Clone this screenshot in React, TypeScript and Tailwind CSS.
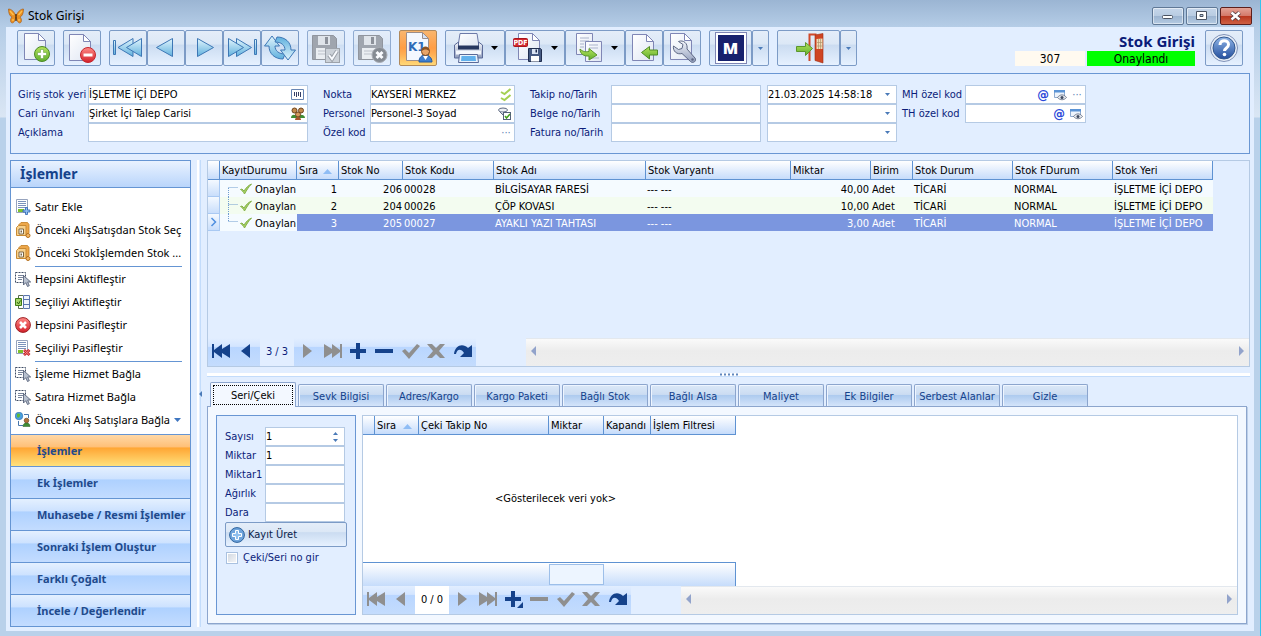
import { useState, type ReactNode } from "react"
import clsx from "clsx"

const UI = "font-['DejaVu_Sans_Condensed','Noto_Sans',sans-serif]"
const SEGOE = "font-['Noto_Sans',sans-serif]"

/* ---------- shared svg paint ---------- */

function Gradients() {
  return (
    <svg className="absolute h-0 w-0" aria-hidden="true">
      <defs>
        <linearGradient id="page" x1="0" y1="0" x2="1" y2="1">
          <stop offset="0" stopColor="#ffffff" />
          <stop offset="1" stopColor="#dfe6f3" />
        </linearGradient>
        <linearGradient id="sky" x1="0" y1="0" x2="0" y2="1">
          <stop offset="0" stopColor="#e2f5fd" />
          <stop offset="1" stopColor="#5fb0dd" />
        </linearGradient>
        <linearGradient id="green" x1="0" y1="0" x2="0" y2="1">
          <stop offset="0" stopColor="#b5e35b" />
          <stop offset="1" stopColor="#5fae2e" />
        </linearGradient>
        <linearGradient id="red" x1="0" y1="0" x2="0" y2="1">
          <stop offset="0" stopColor="#ff8a86" />
          <stop offset="1" stopColor="#d3202a" />
        </linearGradient>
        <linearGradient id="steel" x1="0" y1="0" x2="0" y2="1">
          <stop offset="0" stopColor="#f4f6fb" />
          <stop offset="1" stopColor="#8f9cbb" />
        </linearGradient>
        <linearGradient id="blue" x1="0" y1="0" x2="0" y2="1">
          <stop offset="0" stopColor="#8fb4e6" />
          <stop offset="1" stopColor="#244f9e" />
        </linearGradient>
      </defs>
    </svg>
  )
}

function Icon({ w = 32, h = 32, children }: { w?: number; h?: number; children: ReactNode }) {
  return (
    <svg width={w} height={h} viewBox={`0 0 ${w} ${h}`} className="shrink-0" aria-hidden="true">
      {children}
    </svg>
  )
}

function Sheet({ x = 5, y = 1 }: { x?: number; y?: number }) {
  return (
    <g transform={`translate(${x} ${y})`} stroke="#7f86b5" strokeWidth="1">
      <path d="M.5.5h14l7 7v19H.5z" fill="url(#page)" />
      <path d="M14.500.5v7h7z" fill="#fff" />
    </g>
  )
}

/* ---------- toolbar icons (32px) ---------- */

const NewIcon = () => (
  <Icon>
    <Sheet x={4} />
    <circle cx="22" cy="22" r="7.500" fill="url(#green)" stroke="#4c8a26" />
    <path d="M20.500 17.500h3v3h3v3h-3v3h-3v-3h-3v-3h3z" fill="#fff" stroke="#5b9a35" strokeWidth=".5" />
  </Icon>
)

const DeleteIcon = () => (
  <Icon>
    <Sheet x={3} y={2} />
    <circle cx="22" cy="23" r="7.500" fill="url(#red)" stroke="#c4262d" />
    <path d="M17.500 21.500h9v3h-9z" fill="#fff" />
  </Icon>
)

const tri = { fill: "url(#sky)", stroke: "#3d77b5", strokeWidth: 1, strokeLinejoin: "round" as const }

const FirstIcon = () => (
  <Icon>
    <path d="M1.500 8.500h2v14h-2z" {...tri} />
    <path d="M21 6.500v18L6 15.500z" {...tri} />
    <path d="M29.500 6.500v18l-15-9z" {...tri} />
  </Icon>
)
const PrevIcon = () => (
  <Icon>
    <path d="M22.500 6.500v18l-16-9z" {...tri} />
  </Icon>
)
const NextIcon = () => (
  <Icon>
    <path d="M9.500 6.500v18l16-9z" {...tri} />
  </Icon>
)
const LastIcon = () => (
  <Icon>
    <path d="M28.500 7.500h2v15h-2z" {...tri} />
    <path d="M10.500 6.500v18l15-9z" {...tri} />
    <path d="M2.500 6.500v18l15-9z" {...tri} />
  </Icon>
)

const RefreshIcon = () => (
  <Icon>
    <path d="M8 4L.5 14H5c0 8 6 13 14 13l2-5c-6 0-10-3-10-8h4.500z" {...tri} />
    <path d="M8 4L.5 14H5c0 8 6 13 14 13l2-5c-6 0-10-3-10-8h4.500z" {...tri} transform="rotate(180 16 16)" />
  </Icon>
)

function GreyDisk() {
  return (
    <g>
      <path d="M2.500 3.500h21l3 3v21h-24z" fill="#8f939a" stroke="#7c8087" />
      <path d="M8 4h12v9H8z" fill="#dfe2e6" />
      <path d="M15 5h3v7h-3z" fill="#777b82" />
      <path d="M6 16h17v11H6z" fill="#eceef0" />
      <path d="M8 19h12M8 22h9" stroke="#b4b7bd" />
    </g>
  )
}

const SaveOkIcon = () => (
  <Icon>
    <GreyDisk />
    <rect x="15.500" y="16.500" width="14" height="14" fill="#c6cacf" stroke="#8d9197" />
    <path d="M19 23l3 4 5-8" fill="none" stroke="#8a8e94" strokeWidth="4" />
    <path d="M19 23l3 4 5-8" fill="none" stroke="#fff" strokeWidth="2" />
  </Icon>
)

const SaveCancelIcon = () => (
  <Icon>
    <GreyDisk />
    <circle cx="23.500" cy="23" r="7.500" fill="#6f7379" stroke="#9a9da2" />
    <path d="M20.500 20l6 6m0-6l-6 6" stroke="#fff" strokeWidth="3" />
  </Icon>
)

const KOneIcon = () => (
  <Icon>
    <path d="M4.500.5h16l6 6v22h-22z" fill="#f4f8ff" stroke="#9c8e8a" />
    <path d="M20.500.5v6h6z" fill="#d5e2f5" stroke="#9c8e8a" />
    <text x="6" y="19" fontSize="12" fontWeight="900" fill="#2f6bb8" fontFamily="DejaVu Sans">K1</text>
    <path d="M17 30c0-5 3-7 6-7s7 2 7 7z" fill="#3e7fd0" stroke="#225a9e" />
    <path d="M21 24l2.500 4 2.500-4z" fill="#fff" />
    <circle cx="23.500" cy="19.500" r="4" fill="#e7a468" stroke="#7a461c" />
    <path d="M19.500 19c0-6 8-6 8 0-3-2-5-2-8 0z" fill="#8b5323" />
  </Icon>
)

const PrintIcon = () => (
  <Icon>
    <path d="M7 1.500h17l2 13H5z" fill="url(#page)" stroke="#6d7aa8" />
    <path d="M1.500 13l4-3v6h20v-6l4 3v13h-28z" fill="url(#steel)" stroke="#5b6a98" />
    <path d="M5 13.500h21v4H5z" fill="#27375f" />
    <path d="M3 18.500h25v4H3z" fill="#f5f8fd" />
    <path d="M6.500 22.500h18l1 8h-20z" fill="#e9f3fd" stroke="#5b6a98" />
    <path d="M8.500 24h14l.5 5H8z" fill="#62b1ec" />
  </Icon>
)

function Disk({ x, y }: { x: number; y: number }) {
  return (
    <g transform={`translate(${x} ${y})`}>
      <path d="M.5.5h12l1 1v12H.5z" fill="#465a82" stroke="#1f2c4d" />
      <path d="M4 1h6v5H4z" fill="#dbe4f4" />
      <path d="M7.500 1.500h1.500v3H7.500z" fill="#1f2c4d" />
      <path d="M3 8h8v5.500H3z" fill="#fff" />
    </g>
  )
}

const PdfIcon = () => (
  <Icon>
    <Sheet x={5} />
    <rect x=".5" y="6.500" width="14" height="8" rx="1" fill="#d22a2f" stroke="#a8151b" />
    <text x="7.500" y="13" fontSize="7" fontWeight="700" textAnchor="middle" fill="#fff" fontFamily="DejaVu Sans Condensed">PDF</text>
    <Disk x={15} y={16} />
  </Icon>
)

const CopyIcon = () => (
  <Icon>
    <path d="M3.500 1.500h16v21h-16z" fill="url(#page)" stroke="#8087b5" />
    <path d="M7 6h9M7 9h9M7 12h4M7 15h4" stroke="#a9b3cb" />
    <path d="M12.500 9.500h16v20h-16z" fill="url(#page)" stroke="#8087b5" />
    <path d="M16 13h9M16 16h9M18 26h8" stroke="#a9b3cb" />
    <path d="M7 17c3 3 6 3 9 2.500v-3l8 6.500-8 5v-4c-5 .5-9-2-9-7z" fill="url(#green)" stroke="#5b962c" />
  </Icon>
)

const ImportIcon = () => (
  <Icon>
    <Sheet x={4} y={2} />
    <path d="M13.500 20.500l8-6v3.500h8v5h-8v4z" fill="url(#green)" stroke="#4f8c26" strokeLinejoin="round" />
  </Icon>
)

const WrenchIcon = () => (
  <Icon>
    <Sheet x={4} />
    <path
      d="M7.500 14l5 3.500 3.500-1 1-4-4.500-3c5-2 9.500 2 8.500 7.500l8 9c2 3-2 6-4.500 3.500L16 21.500c-5 1.500-9.500-2.500-8.500-7.500z"
      fill="url(#steel)"
      stroke="#5e6884"
    />
    <circle cx="26.500" cy="27.500" r="1.200" fill="#5e6884" />
  </Icon>
)

const DoorIcon = () => (
  <Icon>
    <path d="M16.500 29V2.500h7" fill="none" stroke="#d0492a" strokeWidth="2" />
    <path d="M22 3l8-1.500V31l-8-2.500z" fill="#cf4423" stroke="#9d2d13" strokeWidth=".6" />
    <path d="M23.500 7l6-.5V17h-6z" fill="#f0dcb6" />
    <path d="M25.500 7v10M27.500 7v10M24 10.500h6M24 14h6" stroke="#b09468" strokeWidth=".7" />
    <path d="M19.500 16.500l-7-6v4h-9v5h9v4z" fill="url(#green)" stroke="#5b962c" strokeLinejoin="round" />
  </Icon>
)

const HelpIcon = () => (
  <Icon>
    <circle cx="16" cy="16" r="13.500" fill="#e8eef7" stroke="#7f92b8" />
    <circle cx="16" cy="16" r="11" fill="url(#blue)" stroke="#33588f" />
    <path d="M12 13c0-6 8.500-5.500 8.500-.5 0 3.500-4 3.500-4 6.500" fill="none" stroke="#fff" strokeWidth="3" />
    <circle cx="16.500" cy="22.500" r="1.800" fill="#fff" />
  </Icon>
)

/* ---------- small icons (16px) ---------- */

const Butterfly = () => (
  <Icon w={16} h={16}>
    <path d="M8 8C6 3 3 1 .5 1c0 4 1 7 3.500 8-2 2-2 5 0 6 2 0 3.500-3 4-6 .5 3 2 6 4 6 2-1 2-4 0-6 2.500-1 3.500-4 3.500-8C13 1 10 3 8 8z" fill="#e98f22" stroke="#a3560f" strokeWidth=".6" />
    <path d="M2 3l3.500 4M14 3l-3.500 4M5 11v2M11 11v2" stroke="#ffc04d" strokeWidth="1.400" />
    <path d="M8 6v7" stroke="#3d2208" strokeWidth="1.200" />
  </Icon>
)

const AddRowIcon = () => (
  <Icon w={16} h={16}>
    <path d="M1.500.5h11v13h-11z" fill="#fff" stroke="#96a3bd" />
    <path d="M3 2.500h8M3 4.500h8M3 6.500h8M3 8.500h8" stroke="#7c93bb" />
    <path d="M3 10h6v3H3z" fill="#7ec12a" />
    <path d="M10.500 8.500h2v2.500H15v2h-2.500v2.500h-2V13H8v-2h2.500z" fill="#8fbcf0" stroke="#2b66b0" strokeWidth=".8" />
  </Icon>
)

const BoxIcon = () => (
  <Icon w={16} h={16}>
    <path d="M3.500 3L6 .5h6.500l1.500 2v8l-3 3z" fill="#eda74a" stroke="#c07c22" strokeWidth=".8" />
    <path d="M1.500 5.500l2-2h7.500v10H1.500z" fill="#f7d08c" stroke="#c98a32" />
    <path d="M4 7h4.500v5H4z" fill="#fff" stroke="#7a6440" />
    <path d="M5.500 8.500h1.500v2H5.500z" fill="#7a6440" />
    <circle cx="13" cy="13.500" r="2" fill="#f3b765" stroke="#b36f1c" />
  </Icon>
)

const SelectIcon = () => (
  <Icon w={16} h={16}>
    <path d="M.5 1.500h10v10H.5z" fill="none" stroke="#3c4a63" strokeDasharray="2 1" />
    <path d="M3 4.500h6M3 6.500h5M3 8.500h4" stroke="#7a869c" />
    <path d="M8.500 4.500v9.500l2.300-2.300 1.700 3.800 1.800-.8-1.600-3.700h3z" fill="#b8c1cf" stroke="#4a566e" strokeWidth=".8" />
  </Icon>
)

const ActivateIcon = () => (
  <Icon w={16} h={16}>
    <path d="M8.500 1.500h6v13h-6zM8.500 5.500h6M8.500 10.500h6" fill="#eef3fb" stroke="#5a75ad" />
    <path d="M3.500 4V1.500H8M3.500 12v2.500H8" fill="none" stroke="#5b6c52" />
    <path d="M.5 4.500h6v7h-6z" fill="#a5d468" stroke="#3f7b14" />
    <path d="M2 8l1.500 2L5.500 6.500" fill="none" stroke="#2f6810" />
  </Icon>
)

const StopIcon = () => (
  <Icon w={16} h={16}>
    <circle cx="8" cy="8" r="7.400" fill="url(#red)" stroke="#9c2226" />
    <path d="M5 5l6 6m0-6l-6 6" stroke="#fff" strokeWidth="2.600" />
  </Icon>
)

const RemoveRowIcon = () => (
  <Icon w={16} h={16}>
    <path d="M1.500.5h11v13h-11z" fill="#fff" stroke="#96a3bd" />
    <path d="M3 2.500h8M3 4.500h8M3 6.500h8M3 8.500h8" stroke="#7c93bb" />
    <path d="M3 10h5v3H3z" fill="#7ec12a" />
    <path d="M9 10l5.500 5m0-5L9 15" stroke="#c8252b" strokeWidth="2.800" />
    <path d="M9.500 10.500l4.500 4m0-4l-4.500 4" stroke="#f58b86" strokeWidth="1" />
  </Icon>
)

const LinkIcon = () => (
  <Icon w={16} h={16}>
    <circle cx="4" cy="4" r="3.800" fill="#4a9fe0" stroke="#256aa8" strokeWidth=".6" />
    <path d="M2 2c2-1 4 0 3 2s-2 2-3 1z" fill="#5fb83a" />
    <path d="M9 2.500h4.500V6M3.500 9v4.500H8" fill="none" stroke="#4776ac" />
    <path d="M8 14.500c0-5 7-5 7 0z" fill="#3f8c35" stroke="#2b5f24" strokeWidth=".5" />
    <circle cx="11.500" cy="8.500" r="2.300" fill="#b0723a" stroke="#5e3513" strokeWidth=".6" />
  </Icon>
)

const BarcodeIcon = () => (
  <Icon w={14} h={12}>
    <path d="M.5.500h12v10H.5z" fill="#fff" stroke="#6886b4" />
    <path d="M3.500 3v4M5.500 3v5M7.500 3v4M9.500 3v5" stroke="#363f66" />
  </Icon>
)

const PeopleIcon = () => (
  <Icon w={14} h={14}>
    <path d="M0 11c0-4 5-4 6-1 1-3 8-3 8 1z" fill="#3f8c35" />
    <circle cx="3.500" cy="3.500" r="2.500" fill="#c48a4c" stroke="#6e4520" />
    <circle cx="10" cy="3.500" r="2.500" fill="#c48a4c" stroke="#6e4520" />
    <circle cx="7" cy="7.500" r="2.500" fill="#d69a5f" stroke="#6e4520" />
    <path d="M4 13c0-4 6-4 6 0z" fill="#a8552c" />
  </Icon>
)

const DoubleCheckIcon = () => (
  <Icon w={12} h={14}>
    <path d="M1 4l3.500 2L10.500 1M1 10l3.500 2 6-5" fill="none" stroke="#a4d052" strokeWidth="2" />
  </Icon>
)

const PersonCheckIcon = () => (
  <Icon w={14} h={14}>
    <ellipse cx="5" cy="3" rx="4.500" ry="2" fill="#eef1f5" stroke="#5d6880" />
    <path d="M1.500 4.500L5 8h3V5" fill="#c9d0dc" stroke="#5d6880" />
    <rect x="5.500" y="5.500" width="7" height="7" fill="#fff" stroke="#55627a" />
    <path d="M7 9l1.500 2L12 7" fill="none" stroke="#46a01e" strokeWidth="1.500" />
  </Icon>
)

const ViewIcon = () => (
  <Icon w={13} h={12}>
    <path d="M.5 1.500h10v7H.5z" fill="#eef4fc" stroke="#8fabd0" />
    <path d="M0 1h11v2.500H0z" fill="#5b94d6" />
    <path d="M3.500 8.500c2.500-3.500 6.500-3.500 9 0-2.500 3-6.500 3-9 0z" fill="#e4e7ec" stroke="#5d687d" strokeWidth=".8" />
    <circle cx="8" cy="8.500" r="1.500" fill="#3e4a60" />
  </Icon>
)

const CheckIcon = () => (
  <Icon w={14} h={14}>
    <path d="M1.500 7.500L3 7l2 2c2-3 4-5.500 7.500-7C9.500 5 7.500 8.500 5.500 12c-1-2-2.500-3.500-4-4.500z" fill="#a3cf62" stroke="#86b24c" strokeWidth="1" strokeLinejoin="round" />
  </Icon>
)

function Caret({ color = "#4a7ab8", up = false }: { color?: string; up?: boolean }) {
  return (
    <Icon w={5} h={3}>
      <path d={up ? "M0 3h5L2.500 0z" : "M0 0h5L2.500 3z"} fill={color} />
    </Icon>
  )
}

/* ---------- building blocks ---------- */

const toolFace =
  "border border-[#7c9bc6] bg-[linear-gradient(#e4edf9_0%,#dce8f6_38%,#cbdcf1_42%,#e6f1ff_100%)]"

function ToolButton({ label, disabled, active, className, children }: {
  label: string
  disabled?: boolean
  active?: boolean
  className?: string
  children: ReactNode
}) {
  return (
    <button
      type="button"
      aria-label={label}
      disabled={disabled}
      className={clsx(
        "flex h-9 items-center justify-center rounded-[2px]",
        active
          ? "border border-[#b0895c] bg-[linear-gradient(#f9b66e_0%,#ff9d45_50%,#ffb055_70%,#ffd877_100%)]"
          : toolFace,
        disabled && "opacity-80",
        className ?? "w-[38px]"
      )}
    >
      {children}
    </button>
  )
}

const MenuArrow = () => (
  <Icon w={7} h={4}>
    <path d="M0 0h7L3.500 4z" />
  </Icon>
)

function Field({ id, label, value = "", labelWidth, fieldWidth, children }: {
  id: string
  label?: string
  value?: string
  labelWidth?: string
  fieldWidth: string
  children?: ReactNode
}) {
  return (
    <div className="flex h-[19px] items-center">
      {label && <label htmlFor={id} className={clsx("shrink-0 whitespace-nowrap text-[#0b1d7a]", labelWidth)}>{label}</label>}
      <div className={clsx("flex h-full items-center gap-1 border border-[#b5cae4] bg-white pr-[2px]", fieldWidth)}>
        <input id={id} aria-label={label ?? id} defaultValue={value} className="h-full w-full min-w-0 flex-1 bg-transparent text-black outline-none" />
        {children}
      </div>
    </div>
  )
}

const Dots = () => <span className="w-3 text-center leading-none text-[#5b7fb5]">···</span>
const At = () => <span className="w-[14px] text-center text-[13px] font-bold leading-none text-[#2a48d8]">@</span>

/* ---------- title bar & toolbar ---------- */

function TitleBar() {
  const btn = "flex h-[18px] w-8 items-center justify-center rounded-[2px] border border-[#5f7896] bg-[linear-gradient(#c5d6ea_0%,#b9cce2_48%,#9db5d1_52%,#b5cbe3_100%)] shadow-[inset_0_0_0_1px_rgba(255,255,255,0.5)]"
  return (
    <header className={clsx("flex h-[27px] shrink-0 items-center gap-1 bg-[linear-gradient(#9bb5d3,#b5cde7)] pl-2 pr-2 pt-1", SEGOE)}>
      <Butterfly />
      <h1 className="flex-1 text-[12px] text-black">Stok Girişi</h1>
      <div className="flex gap-[2px]">
        <button type="button" aria-label="Küçült" className={btn}>
          <Icon w={12} h={10}><rect x=".5" y="4.500" width="10" height="3" rx="1" fill="#fff" stroke="#4a5362" /></Icon>
        </button>
        <button type="button" aria-label="Büyüt" className={btn}>
          <Icon w={12} h={10}><path d="M.5.5h10v8H.5zM4 3.500h3v2H4z" fill="#fff" fillRule="evenodd" stroke="#4a5362" /></Icon>
        </button>
        <button type="button" aria-label="Kapat" className="flex h-[18px] w-8 items-center justify-center rounded-[2px] border border-[#5c1f1c] bg-[linear-gradient(#e3a296_0%,#d4796a_48%,#b9371f_52%,#cf6044_100%)]">
          <Icon w={12} h={10}>
            <path d="M1.500 1.500l8 7m0-7l-8 7" stroke="#4c3a40" strokeWidth="4" />
            <path d="M1.500 1.500l8 7m0-7l-8 7" stroke="#fff" strokeWidth="2.400" />
          </Icon>
        </button>
      </div>
    </header>
  )
}

function Toolbar() {
  return (
    <div className="flex items-start px-[11px] pt-[3px]">
      <div className="flex gap-2" role="toolbar">
        <ToolButton label="Yeni"><NewIcon /></ToolButton>
        <ToolButton label="Sil"><DeleteIcon /></ToolButton>
        <div className="flex">
          <ToolButton label="İlk"><FirstIcon /></ToolButton>
          <ToolButton label="Önceki"><PrevIcon /></ToolButton>
          <ToolButton label="Sonraki"><NextIcon /></ToolButton>
          <ToolButton label="Son"><LastIcon /></ToolButton>
          <ToolButton label="Yenile"><RefreshIcon /></ToolButton>
        </div>
        <ToolButton label="Kaydet" disabled><SaveOkIcon /></ToolButton>
        <ToolButton label="İptal" disabled><SaveCancelIcon /></ToolButton>
        <ToolButton label="K1" active><KOneIcon /></ToolButton>
        <div className="flex">
          <ToolButton label="Yazdır" className="w-[60px] gap-[6px]"><PrintIcon /><MenuArrow /></ToolButton>
          <ToolButton label="PDF" className="w-[60px] gap-[6px]"><PdfIcon /><MenuArrow /></ToolButton>
          <ToolButton label="Kopyala" className="w-[60px] gap-[6px]"><CopyIcon /><MenuArrow /></ToolButton>
          <ToolButton label="İçe aktar"><ImportIcon /></ToolButton>
          <ToolButton label="Ayarlar"><WrenchIcon /></ToolButton>
        </div>
        <div className="flex">
          <ToolButton label="Muhasebe" className="w-[43px]">
            <span className="border border-[#7f86b5] bg-white p-[2px]">
              <span className={clsx("flex h-[26px] w-[26px] items-center justify-center bg-[#17216d] text-[16px] font-black text-white", SEGOE)}>M</span>
            </span>
          </ToolButton>
          <ToolButton label="Muhasebe menüsü" className="w-[17px]"><Caret /></ToolButton>
        </div>
        <div className="flex">
          <ToolButton label="Çıkış" className="w-[63px]"><DoorIcon /></ToolButton>
          <ToolButton label="Çıkış menüsü" className="w-[17px]"><Caret /></ToolButton>
        </div>
      </div>
      <div className="ml-auto mr-[10px] flex flex-col items-end">
        <h2 className={clsx("h-[21px] text-[15px] font-bold leading-[23px] text-[#0a1a78]", SEGOE)}>Stok Girişi</h2>
        <div className="flex gap-[2px] text-center text-[12px] leading-4">
          <span className="h-[15px] w-[70px] bg-[#fffaf0] text-black">307</span>
          <span className="h-[15px] w-[108px] bg-[#00ff00] text-black">Onaylandı</span>
        </div>
      </div>
      <ToolButton label="Yardım"><HelpIcon /></ToolButton>
    </div>
  )
}

function HeaderForm() {
  return (
    <form className="mx-1 mt-[7px] flex h-[81px] border border-[#6996d3] px-[7px] pt-[11px]">
      <div>
        <Field id="giris" label="Giriş stok yeri" value="İŞLETME İÇİ DEPO" labelWidth="w-[70px]" fieldWidth="w-[220px]"><BarcodeIcon /></Field>
        <Field id="cari" label="Cari ünvanı" value="Şirket İçi Talep Carisi" labelWidth="w-[70px]" fieldWidth="w-[220px]"><PeopleIcon /></Field>
        <Field id="aciklama" label="Açıklama" labelWidth="w-[70px]" fieldWidth="w-[220px]" />
      </div>
      <div className="ml-[15px]">
        <Field id="nokta" label="Nokta" value="KAYSERİ MERKEZ" labelWidth="w-[47px]" fieldWidth="w-[145px]"><DoubleCheckIcon /></Field>
        <Field id="personel" label="Personel" value="Personel-3 Soyad" labelWidth="w-[47px]" fieldWidth="w-[145px]"><PersonCheckIcon /></Field>
        <Field id="ozel" label="Özel kod" labelWidth="w-[47px]" fieldWidth="w-[145px]"><Dots /></Field>
      </div>
      <div className="ml-[15px]">
        <Field id="takip" label="Takip no/Tarih" labelWidth="w-[81px]" fieldWidth="w-[150px]" />
        <Field id="belge" label="Belge no/Tarih" labelWidth="w-[81px]" fieldWidth="w-[150px]" />
        <Field id="fatura" label="Fatura no/Tarih" labelWidth="w-[81px]" fieldWidth="w-[150px]" />
      </div>
      <div className="ml-[6px]">
        <Field id="takip-tarih" value="21.03.2025 14:58:18" fieldWidth="w-[130px]"><DateArrow /></Field>
        <Field id="belge-tarih" fieldWidth="w-[130px]"><DateArrow /></Field>
        <Field id="fatura-tarih" fieldWidth="w-[130px]"><DateArrow /></Field>
      </div>
      <div className="ml-[5px]">
        <Field id="mh" label="MH özel kod" labelWidth="w-[63px]" fieldWidth="w-[121px]"><At /><ViewIcon /><Dots /></Field>
        <Field id="th" label="TH özel kod" labelWidth="w-[63px]" fieldWidth="w-[121px]"><At /><ViewIcon /></Field>
      </div>
    </form>
  )
}

const DateArrow = () => <span className="px-1"><Caret /></span>

/* ---------- sidebar ---------- */

const actionGroups = [
  [
    { icon: <AddRowIcon />, text: "Satır Ekle" },
    { icon: <BoxIcon />, text: "Önceki AlışSatışdan Stok Seç" },
    { icon: <BoxIcon />, text: "Önceki Stokİşlemden Stok ..." },
  ],
  [
    { icon: <SelectIcon />, text: "Hepsini Aktifleştir" },
    { icon: <ActivateIcon />, text: "Seçiliyi Aktifleştir" },
    { icon: <StopIcon />, text: "Hepsini Pasifleştir" },
    { icon: <RemoveRowIcon />, text: "Seçiliyi Pasifleştir" },
  ],
  [
    { icon: <SelectIcon />, text: "İşleme Hizmet Bağla" },
    { icon: <SelectIcon />, text: "Satıra Hizmet Bağla" },
    { icon: <LinkIcon />, text: "Önceki Alış Satışlara Bağla", menu: true },
  ],
]

const sections = ["İşlemler", "Ek İşlemler", "Muhasebe / Resmi İşlemler", "Sonraki İşlem Oluştur", "Farklı Çoğalt", "İncele / Değerlendir"]

function Sidebar() {
  const [open, setOpen] = useState("İşlemler")
  return (
    <aside className={clsx("flex w-[181px] shrink-0 flex-col border border-[#6595d3] bg-white", SEGOE)}>
      <h2 className="h-[27px] border-b border-[#6595d3] bg-[linear-gradient(#e9f2ff,#b9d5fb)] pl-[9px] text-[14px] font-bold leading-[26px] text-[#15428b]">İşlemler</h2>
      <div className="flex-1 overflow-hidden pl-1 pt-2">
        {actionGroups.map((group, i) => (
          <div key={i}>
            {i > 0 && <div className="ml-5 mr-2 h-[3px] pt-px"><div className="h-px bg-[#6595d3]" /></div>}
            {group.map((a) => (
              <button key={a.text} type="button" className="flex h-[23px] w-full items-center gap-1 whitespace-nowrap pb-[2px] text-left text-[11px] text-black">
                {a.icon}
                <span>{a.text}</span>
                {"menu" in a && <Icon w={7} h={4}><path d="M0 0h7L3.500 4z" fill="#3f76c0" /></Icon>}
              </button>
            ))}
          </div>
        ))}
      </div>
      <nav className="flex flex-col">
        {sections.map((s) => (
          <button
            key={s}
            type="button"
            onClick={() => setOpen(s)}
            className={clsx(
              "h-8 whitespace-nowrap border-t border-[#6595d3] pl-[26px] text-left text-[11px] font-bold text-[#1f4a8c]",
              s === open
                ? "bg-[linear-gradient(#ffd8a6_0%,#ffc078_38%,#ffa634_42%,#ffe17c_100%)]"
                : "bg-[linear-gradient(#e4f0ff_0%,#cde2ff_38%,#aed1ff_42%,#c3dcff_100%)]"
            )}
          >
            {s}
          </button>
        ))}
      </nav>
    </aside>
  )
}

/* ---------- grids ---------- */

const stockColumns = [
  { title: "KayıtDurumu", width: "w-[77px]" },
  { title: "Sıra", width: "w-[42px]", sorted: true },
  { title: "Stok No", width: "w-16" },
  { title: "Stok Kodu", width: "w-[91px]" },
  { title: "Stok Adı", width: "w-[152px]" },
  { title: "Stok Varyantı", width: "w-[145px]" },
  { title: "Miktar", width: "w-20" },
  { title: "Birim", width: "w-[42px]" },
  { title: "Stok Durum", width: "w-[100px]" },
  { title: "Stok FDurum", width: "w-[100px]" },
  { title: "Stok Yeri", width: "w-[100px]" },
]

const stockRows = [
  { sira: 1, no: "206", kod: "00028", ad: "BİLGİSAYAR FARESİ", miktar: "40,00" },
  { sira: 2, no: "204", kod: "00026", ad: "ÇÖP KOVASI", miktar: "10,00" },
  { sira: 3, no: "205", kod: "00027", ad: "AYAKLI YAZI TAHTASI", miktar: "3,00" },
]

const chekColumns = [
  { title: "Sıra", width: "w-11", sorted: true },
  { title: "Çeki Takip No", width: "w-[130px]" },
  { title: "Miktar", width: "w-[55px]" },
  { title: "Kapandı", width: "w-[47px]" },
  { title: "İşlem Filtresi", width: "w-[85px]" },
]

const headFace = "border-b border-r border-[#5e92d2] bg-[linear-gradient(#ffffff,#c6dcfb)]"

function Head({ columns }: { columns: { title: string; width: string; sorted?: boolean }[] }) {
  return (
    <thead>
      <tr className="h-[19px]">
        <th className={clsx("w-3 p-0", headFace)} aria-label="Seçili satır" />
        {columns.map((c) => (
          <th key={c.title} scope="col" className={clsx("p-0 pl-[2px] pt-[2px] text-left font-normal", headFace, c.width)}>
            <span className="flex items-center justify-between whitespace-nowrap pr-[6px]">
              {c.title}
              {c.sorted && <Icon w={9} h={5}><path d="M0 5h9L4.500 0z" fill="#8fbdf5" /></Icon>}
            </span>
          </th>
        ))}
      </tr>
    </thead>
  )
}

function StockTable() {
  return (
    <table className="w-[1005px] table-fixed border-separate border-spacing-0 text-black">
      <Head columns={stockColumns} />
      <tbody>
        {stockRows.map((r, i) => {
          const selected = i === 2
          const row = selected ? "bg-[#7b96df] text-white" : i === 1 ? "bg-[#f3fcf0]" : "bg-[#f5fbff]"
          const cell = clsx("whitespace-nowrap p-0 pl-px pt-[2px]", row)
          return (
            <tr key={r.sira} className="h-[17px]">
              <td className="border-b border-r border-[#a9c9f3] bg-[linear-gradient(#f4f9ff,#c9defb)] p-0">
                {selected && <Icon w={11} h={12}><path d="M3.500 2l4 4-4 4" fill="none" stroke="#4f8fe0" strokeWidth="1.500" /></Icon>}
              </td>
              <td className={clsx("overflow-hidden p-0 pl-2", i === 1 ? "bg-[#f3fcf0]" : "bg-[#f5fbff]")}>
                <div className="flex h-[17px] items-center whitespace-nowrap">
                  <Icon w={11} h={17}>
                    <path d={i === 0 ? "M.5 17V8" : selected ? "M.5 0v8" : "M.5 0v17"} stroke="#6f9ccf" strokeDasharray="1 1" />
                    <path d="M.5 7.500h9" stroke="#6f9ccf" strokeDasharray="1 1" />
                  </Icon>
                  <CheckIcon />
                  <span className="ml-[2px] pt-[2px]">Onaylan</span>
                </div>
              </td>
              <td className={clsx(cell, "pr-[2px] text-right")}>{r.sira}</td>
              <td className={clsx(cell, "pr-px text-right")}>{r.no}</td>
              <td className={cell}>{r.kod}</td>
              <td className={cell}>{r.ad}</td>
              <td className={cell}>--- ---</td>
              <td className={clsx(cell, "pr-[2px] text-right")}>{r.miktar}</td>
              <td className={cell}>Adet</td>
              <td className={cell}>TİCARİ</td>
              <td className={cell}>NORMAL</td>
              <td className={cell}>İŞLETME İÇİ DEPO</td>
            </tr>
          )
        })}
      </tbody>
    </table>
  )
}

function NavButton({ label, on, d, children }: { label: string; on?: boolean; d?: string; children?: ReactNode }) {
  return (
    <button type="button" aria-label={label} disabled={!on} className={clsx("flex h-7 w-[26px] items-center justify-center pb-[2px]", on ? "text-[#15428b]" : "text-[#8f8f8f]")}>
      <svg width="20" height="18" viewBox="0 0 20 18" fill="currentColor" aria-hidden="true">
        {d && <path d={d} />}
        {children}
      </svg>
    </button>
  )
}

function Navigator({ position, filled }: { position: string; filled?: boolean }) {
  const face = "bg-[linear-gradient(#e2eeff_0%,#d3e5ff_30%,#b9d6ff_34%,#c4dcfd_100%)]"
  return (
    <div className="flex h-7 shrink-0">
      <div className={clsx("flex w-[52px]", face)}>
        <NavButton label="İlk kayıt" on={filled} d="M1 2h2v6l8-6v5l8-5v14l-8-5v5L3 10v6H1z" />
        <NavButton label="Önceki kayıt" on={filled} d="M13 2v14L4 9z" />
      </div>
      <output className={clsx("w-[34px] text-center leading-7", filled ? "text-[#0b1d7a]" : "bg-white text-black")}>{position}</output>
      <div className={clsx("flex w-[182px]", face)}>
        <NavButton label="Sonraki kayıt" d="M6 2v14l9-7z" />
        <NavButton label="Son kayıt" d="M19 2h-2v6L9 2v5L1 2v14l8-5v5l8-6v6h2z" />
        <NavButton label="Ekle" on d="M7 1h4v6h6v4h-6v6H7v-6H1V7h6z">
          {!filled && <path d="M19 12v6h-6z" />}
        </NavButton>
        <NavButton label="Sil" on={filled} d="M0 7h18v4H0z" />
        <NavButton label="Onayla" d="M1 9l3-2 4 4 8-9 3 2L8 17z" />
        <NavButton label="Vazgeç" d="M0 2h5l4 4 4-4h5l-6 7 6 7h-5l-4-4-4 4H0l6-7z" />
        <NavButton label="Yenile" on d="M1 12C2 3 10 1 15 6l4-3v12H7l4-4C8 6 4 7 3 12z" />
      </div>
      <div className="ml-[50px] flex flex-1 items-center justify-between border-t border-[#e3e8ee] bg-[linear-gradient(#fafafa_0%,#ececec_45%,#eeeeee_100%)] px-1 pb-[3px]">
        <Icon w={6} h={10}><path d="M6 0v10L1 5z" fill="#92a3cb" /></Icon>
        <Icon w={6} h={10}><path d="M0 0v10l5-5z" fill="#92a3cb" /></Icon>
      </div>
    </div>
  )
}

/* ---------- detail tabs ---------- */

const tabs = ["Seri/Çeki", "Sevk Bilgisi", "Adres/Kargo", "Kargo Paketi", "Bağlı Stok", "Bağlı Alsa", "Maliyet", "Ek Bilgiler", "Serbest Alanlar", "Gizle"]

function TabStrip() {
  const [current, setCurrent] = useState(tabs[0])
  return (
    <div role="tablist" className="flex h-6 items-end gap-[2px] pl-[3px]">
      {tabs.map((t) => {
        const on = t === current
        return (
          <button
            key={t}
            type="button"
            role="tab"
            aria-selected={on}
            onClick={() => setCurrent(t)}
            className={clsx(
              "w-[86px] whitespace-nowrap rounded-t-[2px] border border-b-0 border-[#8ca5cd]",
              on
                ? "relative -mb-px h-[25px] bg-[#f3f8ff] p-[2px] text-black"
                : "h-[22px] bg-[linear-gradient(#dbe8f7_0%,#cbdcf2_45%,#aecbef_50%,#d4e4fa_100%)] pt-[3px] text-[#15428b] shadow-[inset_1px_1px_0_#eef5ff]"
            )}
          >
            {on ? <span className="flex h-5 items-center justify-center border border-dotted border-black pt-[2px]">{t}</span> : t}
          </button>
        )
      })}
    </div>
  )
}

function SerialForm() {
  return (
    <form className="w-[140px] shrink-0 border border-[#6996d3] bg-[#e2eeff] pl-2 pt-[11px]">
      <Field id="sayisi" label="Sayısı" value="1" labelWidth="w-10" fieldWidth="w-20">
        <span className="flex flex-col gap-1 pr-1"><Caret up /><Caret /></span>
      </Field>
      <Field id="miktar" label="Miktar" value="1" labelWidth="w-10" fieldWidth="w-20" />
      <Field id="miktar1" label="Miktar1" labelWidth="w-10" fieldWidth="w-20" />
      <Field id="agirlik" label="Ağırlık" labelWidth="w-10" fieldWidth="w-20" />
      <Field id="dara" label="Dara" labelWidth="w-10" fieldWidth="w-20" />
      <button type="button" className={clsx("flex h-[25px] w-[122px] items-center gap-[3px] rounded-[2px] pl-[3px] text-[#0b1d4a]", toolFace)}>
        <Icon w={16} h={16}>
          <circle cx="8" cy="8" r="7.400" fill="#6fa4dc" stroke="#2f649e" />
          <path d="M6.500 3.500h3v3h3v3h-3v3h-3v-3h-3v-3h3z" fill="#8fbfee" stroke="#fff" />
        </Icon>
        Kayıt Üret
      </button>
      <label className="mt-[2px] flex h-[17px] items-center gap-[5px] pl-px text-[#0b1d7a]">
        <input type="checkbox" className="h-3 w-3 appearance-none border border-[#a9c1e0] bg-[linear-gradient(135deg,#cfd6df,#f6f7f9)] shadow-[inset_0_0_0_1px_#fff]" />
        Çeki/Seri no gir
      </label>
    </form>
  )
}

function SerialGrid() {
  return (
    <div className="flex min-w-0 flex-1 flex-col border border-[#b5cae4] bg-white">
      <table className="w-[373px] table-fixed border-separate border-spacing-0 text-black">
        <Head columns={chekColumns} />
      </table>
      <div className="flex w-[373px] flex-1 items-center justify-center pl-3 text-black">&lt;Gösterilecek veri yok&gt;</div>
      <div className="flex h-6 w-[373px] shrink-0 border-r border-t border-[#5e92d2] bg-[linear-gradient(#ffffff,#c6dcfb)] py-px pl-[186px]">
        <div className="w-[55px] border border-[#9dbfe9] bg-[#edf5ff]" />
      </div>
      <div className="bg-[#e2eeff]"><Navigator position="0 / 0" /></div>
    </div>
  )
}

export default function App() {
  return (
    <div
      className={clsx(
        "flex h-screen flex-col border-r border-[#35c4ee] bg-[#b9d1ea] text-[11px] leading-[14px]",
        "bg-[linear-gradient(#b5cde7_27px,#dae6f4_117px,#b9d1ea_118px)]",
        UI
      )}
    >
      <Gradients />
      <TitleBar />
      <main className="mx-[6px] mb-[5px] flex min-h-0 flex-1 flex-col bg-[#e2eeff]">
        <Toolbar />
        <HeaderForm />
        <div className="mx-1 mb-1 mt-[6px] flex min-h-0 flex-1">
          <Sidebar />
          <div className="flex w-4 shrink-0 items-center pl-[6px]">
            <div className="flex h-full w-1 items-center border-l-2 border-r border-l-white border-r-[#c3dcfb]">
              <Icon w={3} h={6}><path d="M3 0v6L0 3z" fill="#4a7ab8" /></Icon>
            </div>
          </div>
          <div className="flex min-w-0 flex-1 flex-col">
            <section className="flex min-h-0 flex-1 flex-col justify-between border border-[#b5cae4]">
              <StockTable />
              <Navigator position="3 / 3" filled />
            </section>
            <div className="mb-[5px] mt-[6px] flex h-1 shrink-0 items-start justify-center border-b border-[#c3dcfb] bg-white">
              <Icon w={18} h={3}><path d="M0 1.500h18" stroke="#5f86bd" strokeWidth="2" strokeDasharray="2 2" /></Icon>
            </div>
            <TabStrip />
            <section className="mb-[3px] mr-[3px] flex h-[218px] shrink-0 gap-[6px] border border-[#8ca5cd] bg-[#f3f8ff] p-2 shadow-[1px_1px_0_#bccfe8]">
              <SerialForm />
              <SerialGrid />
            </section>
          </div>
        </div>
      </main>
    </div>
  )
}
